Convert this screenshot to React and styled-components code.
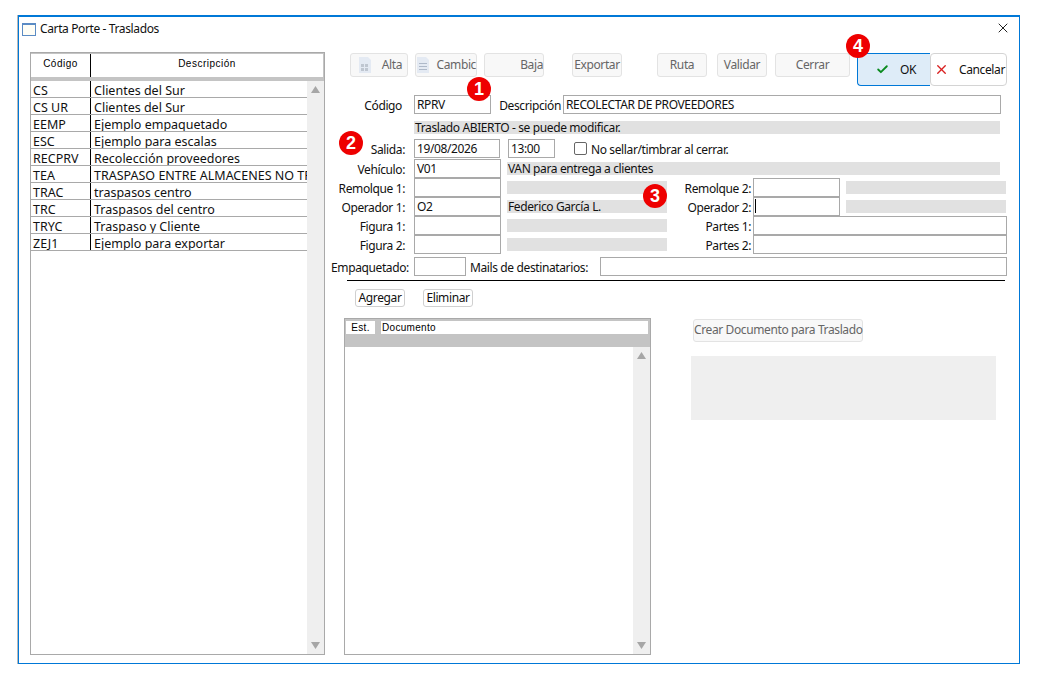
import React from "react";
import styled, { createGlobalStyle } from "styled-components";
import { Check, X } from "lucide-react";

const GlobalStyle = createGlobalStyle`
  html, body {
    margin: 0;
    padding: 0;
    background: #fff;
  }
  * {
    box-sizing: border-box;
  }
`;

const Window = styled.div`
  position: relative;
  width: 1002px;
  height: 649px;
  margin: 15px 0 0 18px;
  border: 1px solid #0078d7;
  border-top-width: 2px;
  box-shadow: -1px 0 0 #b9b9b9;
  background: #fff;
  font-family: "Noto Sans", sans-serif;
  font-size: 12px;
  letter-spacing: -0.38px;
  color: #111;
  display: flex;
  flex-direction: column;
`;

const TitleBar = styled.div`
  height: 35px;
  flex: none;
  display: flex;
  align-items: flex-start;
  padding: 5px 8px 0 3px;
`;

const WindowIcon = styled.div`
  width: 14px;
  height: 13px;
  margin: 1px 4px 0 0;
  border: 1px solid #5b8bc4;
  border-top-width: 2px;
  background: #fffef6;
`;

const Title = styled.div`
  flex: 1;
  line-height: 14px;
`;

const Body = styled.div`
  flex: 1;
  display: flex;
  padding: 0 12px 8px 11px;
  min-height: 0;
`;

const ListPanel = styled.div`
  width: 295px;
  flex: none;
  border: 1px solid #a9a9a9;
  display: flex;
  flex-direction: column;
`;

const ListHeader = styled.div`
  height: 28px;
  flex: none;
  display: flex;
  background: #c4c4c4;
  padding: 1px 1px 4px 0;
`;

const HeadCell = styled.div`
  width: ${p => p.$w || "auto"};
  flex: ${p => (p.$w ? "none" : 1)};
  background: #fff;
  text-align: center;
  line-height: 20px;
  font-family: "Liberation Sans", sans-serif;
  font-size: 10px;
  letter-spacing: 0.5px;
  color: #000;
  border-right: ${p => (p.$w ? "1px solid #000" : "none")};
`;

const ListBody = styled.div`
  flex: 1;
  display: flex;
  min-height: 0;
`;

const Rows = styled.div`
  flex: 1;
  min-width: 0;
`;

const ListRow = styled.div`
  display: flex;
  height: 17px;
  border-bottom: 1px solid #a9a9a9;
  line-height: 20px;
  font-size: 12.5px;
  letter-spacing: 0;
  white-space: nowrap;
  overflow: hidden;
`;

const CodeCell = styled.div`
  width: 60px;
  flex: none;
  padding-left: 2px;
  border-right: 1px solid #000;
`;

const DescCell = styled.div`
  padding-left: 3px;
`;

const Scrollbar = styled.div`
  width: 17px;
  flex: none;
  background: #efefef;
  display: flex;
  flex-direction: column;
  justify-content: space-between;
  align-items: center;
  padding: 5px 0;
`;

const Form = styled.div`
  flex: 1;
  margin-left: 6px;
  min-width: 0;
`;

const Toolbar = styled.div`
  display: flex;
  align-items: flex-start;
  height: 33px;
  margin-top: 1px;
  padding-left: 19px;
`;

const ToolButton = styled.div`
  width: ${p => p.$w}px;
  height: 24px;
  margin-left: ${p => p.$ml || 0}px;
  background: #f8f8f8;
  border: 1px solid #e3e3e3;
  border-radius: 3px;
  color: #666;
  line-height: 21px;
  padding-right: ${p => p.$pr || 0}px;
  display: flex;
  justify-content: ${p => (p.$split ? "space-between" : "center")};
  white-space: nowrap;
`;

const ToolIcon = styled.svg`
  width: 16px;
  height: 18px;
  margin: 2px 0 0 ${p => p.$ml}px;
  flex: none;
`;

const ActionButton = styled.div`
  width: ${p => p.$w}px;
  height: 33px;
  margin-left: ${p => p.$ml || 0}px;
  display: flex;
  align-items: center;
  gap: ${p => p.$gap}px;
  padding-left: ${p => p.$pl}px;
  background: ${p => (p.$primary ? "#deecf8" : "#fff")};
  border: 1px solid ${p => (p.$primary ? "#0078d7" : "#d4d4d4")};
  border-radius: 4px;
  ${p => p.$primary && "border-right: none; border-radius: 4px 0 0 4px;"}
  white-space: nowrap;
`;

const FormRow = styled.div`
  display: flex;
  align-items: flex-start;
  height: ${p => p.$h || 19}px;
  margin-top: ${p => p.$mt || 0}px;
`;

const Label = styled.div`
  width: ${p => p.$w || 74}px;
  margin-right: ${p => (p.$mr === undefined ? 9 : p.$mr)}px;
  flex: none;
  text-align: right;
  line-height: 21px;
  white-space: nowrap;
`;

const Field = styled.div`
  position: relative;
  width: ${p => p.$w || 87}px;
  height: 19px;
  margin-left: ${p => p.$ml || 0}px;
  flex: none;
  border: 1px solid #a9a9a9;
  background: #fff;
  line-height: 17px;
  padding-left: 2px;
  white-space: nowrap;
  overflow: hidden;
  ${p =>
    p.$caret &&
    `&::after {
      content: "";
      position: absolute;
      left: 1px;
      top: 1px;
      width: 1px;
      height: 14px;
      background: #000;
    }`}
`;

const Info = styled.div`
  width: ${p => p.$w || 160}px;
  height: 13px;
  margin: ${p => p.$mt ?? 3}px 0 0 ${p => p.$ml ?? 6}px;
  flex: none;
  background: #e1e1e1;
  line-height: 14px;
  padding-left: 1px;
  white-space: nowrap;
`;

const CheckBox = styled.div`
  width: 13px;
  height: 13px;
  margin: 3px 4px 0 19px;
  flex: none;
  border: 1.5px solid #666;
  border-radius: 2px;
`;

const CheckLabel = styled.div`
  line-height: 21px;
`;

const Divider = styled.div`
  height: 1px;
  margin: 4px 2px 0 16px;
  background: #000;
`;

const ListActions = styled.div`
  display: flex;
  gap: 18px;
  margin: 8px 0 0 24px;
`;

const SmallButton = styled.div`
  width: 50px;
  height: 18px;
  border: 1px solid #d0d0d0;
  border-radius: 3px;
  text-align: center;
  line-height: 15px;
`;

const Lower = styled.div`
  display: flex;
  margin-top: 11px;
  padding-left: 13px;
`;

const DocGrid = styled.div`
  width: 307px;
  height: 337px;
  flex: none;
  border: 1px solid #a9a9a9;
  display: flex;
  flex-direction: column;
`;

const DocHeader = styled.div`
  height: 28px;
  flex: none;
  display: flex;
  gap: 6px;
  align-items: flex-start;
  background: #c4c4c4;
  padding: 2px 2px 0 1px;
  font-family: "Liberation Sans", sans-serif;
  font-size: 10px;
  letter-spacing: 0.3px;
  color: #000;
`;

const DocHeadCell = styled.div`
  width: ${p => p.$w || "auto"};
  flex: ${p => (p.$w ? "none" : 1)};
  height: 13px;
  background: #fff;
  line-height: 13px;
  text-align: ${p => (p.$w ? "center" : "left")};
  padding-left: ${p => (p.$w ? 0 : 1)}px;
`;

const DocBody = styled.div`
  flex: 1;
  display: flex;
  justify-content: flex-end;
  min-height: 0;
`;

const SidePanel = styled.div`
  margin-left: 40px;
`;

const CreateButton = styled.div`
  width: 170px;
  height: 23px;
  margin: 1px 0 0 2px;
  background: #f8f8f8;
  border: 1px solid #e3e3e3;
  border-radius: 3px;
  color: #666;
  text-align: center;
  line-height: 20px;
  white-space: nowrap;
`;

const GreyBox = styled.div`
  width: 305px;
  height: 64px;
  margin-top: 14px;
  background: #efefef;
`;

const Badge = styled.div`
  position: absolute;
  left: ${p => p.$x - 12 - 19}px;
  top: ${p => p.$y - 12 - 17}px;
  width: 24px;
  height: 24px;
  border-radius: 50%;
  background: #ee0000;
  color: #fff;
  font-family: "Liberation Sans", sans-serif;
  font-weight: bold;
  font-size: 18px;
  letter-spacing: 0;
  line-height: 24px;
  text-align: center;
`;

const CloseBtn = styled(X)`
  display: block;
  margin-top: -2px;
`;

const Arrow = ({ down }) => (
  <svg width="9" height="7" viewBox="0 0 9 7">
    <path d={down ? "M0 0H9L4.5 7Z" : "M0 7H9L4.5 0Z"} fill="#a6a6a6" />
  </svg>
);

const items = [
  ["CS", "Clientes del Sur"],
  ["CS UR", "Clientes del Sur"],
  ["EEMP", "Ejemplo empaquetado"],
  ["ESC", "Ejemplo para escalas"],
  ["RECPRV", "Recolección proveedores"],
  ["TEA", "TRASPASO ENTRE ALMACENES NO TRASPASO"],
  ["TRAC", "traspasos centro"],
  ["TRC", "Traspasos del centro"],
  ["TRYC", "Traspaso y Cliente"],
  ["ZEJ1", "Ejemplo para exportar"]
];

export default function App() {
  return (
    <>
      <GlobalStyle />
      <Window>
        <TitleBar>
          <WindowIcon />
          <Title>Carta Porte - Traslados</Title>
          <CloseBtn size={16} strokeWidth={1.4} color="#111" />
        </TitleBar>
        <Body>
          <ListPanel>
            <ListHeader>
              <HeadCell $w="60px">Código</HeadCell>
              <HeadCell>Descripción</HeadCell>
            </ListHeader>
            <ListBody>
              <Rows>
                {items.map(([code, desc]) => (
                  <ListRow key={code}>
                    <CodeCell>{code}</CodeCell>
                    <DescCell>{desc}</DescCell>
                  </ListRow>
                ))}
              </Rows>
              <Scrollbar>
                <Arrow />
                <Arrow down />
              </Scrollbar>
            </ListBody>
          </ListPanel>
          <Form>
            <Toolbar>
              <ToolButton $w={58} $split $pr={5}>
                <ToolIcon viewBox="0 0 16 18" $ml={6}>
                  <path d="M2 1h9l3 3v13H2z" fill="#e4eaf3" />
                  <path d="M4 8h3v3H4zM8 8h3v3H8zM4 12h3v3H4zM8 12h3v3H8z" fill="#bfc6d0" />
                </ToolIcon>
                <span>Alta</span>
              </ToolButton>
              <ToolButton $w={62} $ml={7} $split>
                <ToolIcon viewBox="0 0 16 18" $ml={-1}>
                  <path d="M2 1h9l3 3v13H2z" fill="#e4eaf3" />
                  <path d="M4 7h8v1H4zM4 10h8v1H4zM4 13h8v1H4z" fill="#aeb9c9" />
                </ToolIcon>
                <span>Cambic</span>
              </ToolButton>
              <ToolButton $w={60} $ml={7} $split>
                <span />
                <span>Baja</span>
              </ToolButton>
              <ToolButton $w={50} $ml={28}>Exportar</ToolButton>
              <ToolButton $w={50} $ml={35}>Ruta</ToolButton>
              <ToolButton $w={50} $ml={10}>Validar</ToolButton>
              <ToolButton $w={75} $ml={8}>Cerrar</ToolButton>
              <ActionButton $w={73} $ml={7} $primary $pl={18} $gap={11}>
                <Check size={13} strokeWidth={3.4} color="#0a8a1e" />
                OK
              </ActionButton>
              <ActionButton $w={77} $pl={3} $gap={10}>
                <X size={15} strokeWidth={2.2} color="#d92020" />
                Cancelar
              </ActionButton>
            </Toolbar>

            <FormRow $mt={9}>
              <Label $w={71} $mr={12}>Código</Label>
              <Field $w={77}>RPRV</Field>
              <Label $w={70} $mr={2}>Descripción</Label>
              <Field $w={438}>RECOLECTAR DE PROVEEDORES</Field>
            </FormRow>
            <FormRow $mt={7} $h={13}>
              <Label />
              <Info $w={586} $mt={0} $ml={0}>Traslado ABIERTO - se puede modificar.</Info>
            </FormRow>
            <FormRow $mt={5} $h={20}>
              <Label>Salida:</Label>
              <Field $w={86}>19/08/2026</Field>
              <Field $w={47} $ml={8}>13:00</Field>
              <CheckBox />
              <CheckLabel>No sellar/timbrar al cerrar.</CheckLabel>
            </FormRow>
            <FormRow>
              <Label>Vehículo:</Label>
              <Field>V01</Field>
              <Info $w={493}>VAN para entrega a clientes</Info>
            </FormRow>
            <FormRow>
              <Label>Remolque 1:</Label>
              <Field />
              <Info />
              <Label $w={84} $mr={2}>Remolque 2:</Label>
              <Field />
              <Info />
            </FormRow>
            <FormRow>
              <Label>Operador 1:</Label>
              <Field>O2</Field>
              <Info>Federico García L.</Info>
              <Label $w={84} $mr={2}>Operador 2:</Label>
              <Field $caret />
              <Info />
            </FormRow>
            <FormRow>
              <Label>Figura 1:</Label>
              <Field />
              <Info />
              <Label $w={84} $mr={2}>Partes 1:</Label>
              <Field $w={254} />
            </FormRow>
            <FormRow>
              <Label>Figura 2:</Label>
              <Field />
              <Info />
              <Label $w={84} $mr={2}>Partes 2:</Label>
              <Field $w={254} />
            </FormRow>
            <FormRow $mt={3}>
              <Label $w={77} $mr={6}>Empaquetado:</Label>
              <Field $w={52} />
              <Label $w={122} $mr={12}>Mails de destinatarios:</Label>
              <Field $w={407} />
            </FormRow>
            <Divider />
            <ListActions>
              <SmallButton>Agregar</SmallButton>
              <SmallButton>Eliminar</SmallButton>
            </ListActions>
            <Lower>
              <DocGrid>
                <DocHeader>
                  <DocHeadCell $w="29px">Est.</DocHeadCell>
                  <DocHeadCell>Documento</DocHeadCell>
                </DocHeader>
                <DocBody>
                  <Scrollbar>
                    <Arrow />
                    <Arrow down />
                  </Scrollbar>
                </DocBody>
              </DocGrid>
              <SidePanel>
                <CreateButton>Crear Documento para Traslado</CreateButton>
                <GreyBox />
              </SidePanel>
            </Lower>
          </Form>
        </Body>
        <Badge $x={479} $y={89}>1</Badge>
        <Badge $x={351} $y={143}>2</Badge>
        <Badge $x={655} $y={196}>3</Badge>
        <Badge $x={858} $y={46}>4</Badge>
      </Window>
    </>
  );
}
